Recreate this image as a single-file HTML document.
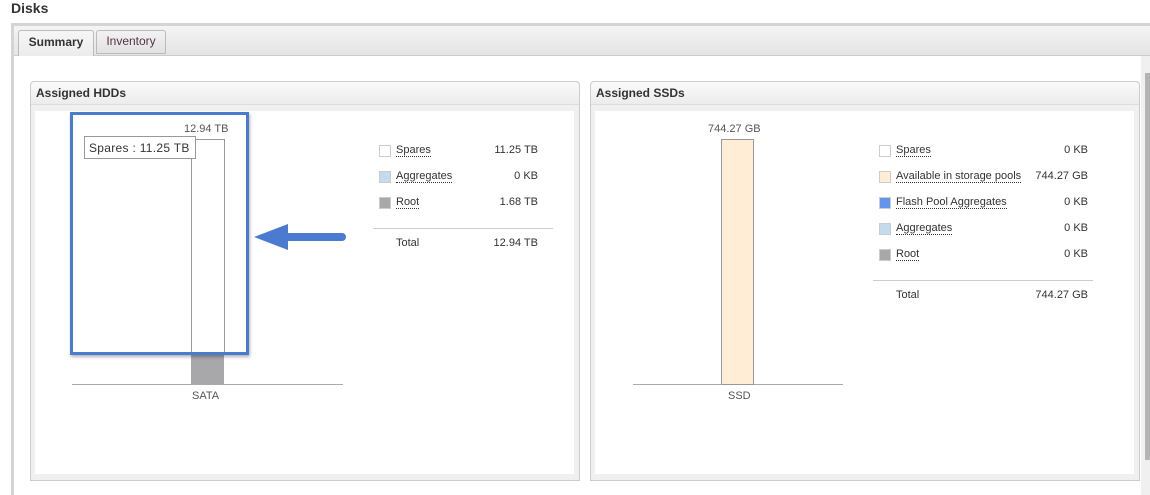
<!DOCTYPE html><html><head><style>
body{margin:0;width:1150px;height:495px;overflow:hidden;background:#fff;font-family:"Liberation Sans",Arial,sans-serif;position:relative}
.a{position:absolute}
.h{font-weight:bold;font-size:12px;color:#333}
.lg{font-size:11px;color:#333}
.lk{border-bottom:1px dotted #333;line-height:12px}
.sw{position:absolute;width:10px;height:10px;border:1px solid #ccc}
.v{position:absolute;text-align:right;width:100px}
</style></head><body>
<div class="a" style="left:11px;top:0;font-weight:bold;font-size:14px;color:#333">Disks</div>
<div class="a" style="left:11px;top:23px;width:1139px;height:472px;background:#d4d4d4"></div>
<div class="a" style="left:14px;top:26px;width:1136px;height:29px;background:linear-gradient(#f4f4f4,#e4e4e4);border-bottom:1px solid #ccc"></div>
<div class="a" style="left:14px;top:56px;width:1136px;height:439px;background:#fff"></div>
<div class="a" style="left:18px;top:30px;width:74px;height:25px;background:linear-gradient(#f6f6f6,#ececec);border:1px solid #bbb;border-bottom:none;border-radius:3px 3px 0 0;font-size:12px;font-weight:bold;color:#333;text-align:center;line-height:22px">Summary</div>
<div class="a" style="left:96px;top:30px;width:68px;height:22px;background:linear-gradient(#f2f2f2,#e2e2e2);border:1px solid #bbb;border-radius:3px 3px 0 0;font-size:12px;color:#553344;text-align:center;line-height:21px">Inventory</div>
<div class="a" style="left:1141px;top:56px;width:9px;height:439px;background:#f0f0f0"></div>
<div class="a" style="left:1145px;top:73px;width:5px;height:387px;background:#b4b4b4"></div>
<!-- HDD panel -->
<div class="a" style="left:30px;top:81px;width:548px;height:398px;border:1px solid #ccc;border-radius:4px 4px 0 0;background:#f0f0f0"></div>
<div class="a" style="left:31px;top:82px;width:548px;height:22px;background:linear-gradient(#fafafa,#ececec);border-bottom:1px solid #ddd;border-radius:4px 4px 0 0"></div>
<div class="a h" style="left:36px;top:86px">Assigned HDDs</div>
<div class="a" style="left:35px;top:111px;width:539px;height:363px;background:#fff"></div>
<div class="a" style="left:72px;top:384px;width:271px;height:1px;background:#aaa"></div>
<div class="a" style="left:191px;top:139px;width:32px;height:213px;border:1px solid #999;border-bottom:none;background:#fff"></div>
<div class="a" style="left:191px;top:352px;width:33px;height:32px;background:#a8a8aa"></div>
<div class="a" style="left:184px;top:123px;font-size:11px;color:#555">12.94 TB</div>
<div class="a" style="left:192px;top:390px;font-size:11px;color:#555">SATA</div>
<div class="a" style="left:70px;top:112px;width:173px;height:237px;border:3px solid #4a7bd0;box-shadow:1px 2px 3px rgba(0,0,0,.3)"></div>
<div class="a" style="left:84px;top:136px;height:23px;border:1px solid #999;background:#fff;font-size:12px;color:#333;line-height:23px;padding-left:4px;box-sizing:border-box;width:112px;letter-spacing:.3px">Spares : 11.25 TB</div>
<svg class="a" style="left:252px;top:222px" width="100" height="32"><path d="M90 15 L30 15" stroke="#4a7bd0" stroke-width="8" stroke-linecap="round"/><path d="M2 15 L36 2 L36 28 Z" fill="#4a7bd0"/></svg>
<div class="lg">
<div class="sw" style="left:379px;top:145px;background:#fff"></div><div class="a" style="left:396px;top:144px"><span class="lk">Spares</span></div><div class="v" style="left:438px;top:144px">11.25 TB</div>
<div class="sw" style="left:379px;top:171px;background:#c2dbee"></div><div class="a" style="left:396px;top:170px"><span class="lk">Aggregates</span></div><div class="v" style="left:438px;top:170px">0 KB</div>
<div class="sw" style="left:379px;top:197px;background:#a8a8aa"></div><div class="a" style="left:396px;top:196px"><span class="lk">Root</span></div><div class="v" style="left:438px;top:196px">1.68 TB</div>
<div class="a" style="left:373px;top:228px;width:180px;height:1px;background:#ccc"></div>
<div class="a" style="left:396px;top:237px">Total</div><div class="v" style="left:438px;top:237px">12.94 TB</div>
</div>
<!-- SSD panel -->
<div class="a" style="left:590px;top:81px;width:548px;height:398px;border:1px solid #ccc;border-radius:4px 4px 0 0;background:#f0f0f0"></div>
<div class="a" style="left:591px;top:82px;width:548px;height:22px;background:linear-gradient(#fafafa,#ececec);border-bottom:1px solid #ddd;border-radius:4px 4px 0 0"></div>
<div class="a h" style="left:596px;top:86px">Assigned SSDs</div>
<div class="a" style="left:595px;top:111px;width:539px;height:363px;background:#fff"></div>
<div class="a" style="left:633px;top:384px;width:210px;height:1px;background:#aaa"></div>
<div class="a" style="left:721px;top:139px;width:31px;height:244px;border:1px solid #999;background:#ffedd6"></div>
<div class="a" style="left:708px;top:123px;font-size:11px;color:#555">744.27 GB</div>
<div class="a" style="left:728px;top:390px;font-size:11px;color:#555">SSD</div>
<div class="lg">
<div class="sw" style="left:879px;top:145px;background:#fff"></div><div class="a" style="left:896px;top:144px"><span class="lk">Spares</span></div><div class="v" style="left:988px;top:144px">0 KB</div>
<div class="sw" style="left:879px;top:171px;background:#ffedd6"></div><div class="a" style="left:896px;top:170px"><span class="lk">Available in storage pools</span></div><div class="v" style="left:988px;top:170px">744.27 GB</div>
<div class="sw" style="left:879px;top:197px;background:#6495ed"></div><div class="a" style="left:896px;top:196px"><span class="lk">Flash Pool Aggregates</span></div><div class="v" style="left:988px;top:196px">0 KB</div>
<div class="sw" style="left:879px;top:223px;background:#c2dbee"></div><div class="a" style="left:896px;top:222px"><span class="lk">Aggregates</span></div><div class="v" style="left:988px;top:222px">0 KB</div>
<div class="sw" style="left:879px;top:249px;background:#a8a8aa"></div><div class="a" style="left:896px;top:248px"><span class="lk">Root</span></div><div class="v" style="left:988px;top:248px">0 KB</div>
<div class="a" style="left:873px;top:280px;width:220px;height:1px;background:#ccc"></div>
<div class="a" style="left:896px;top:289px">Total</div><div class="v" style="left:988px;top:289px">744.27 GB</div>
</div>
</body></html>
